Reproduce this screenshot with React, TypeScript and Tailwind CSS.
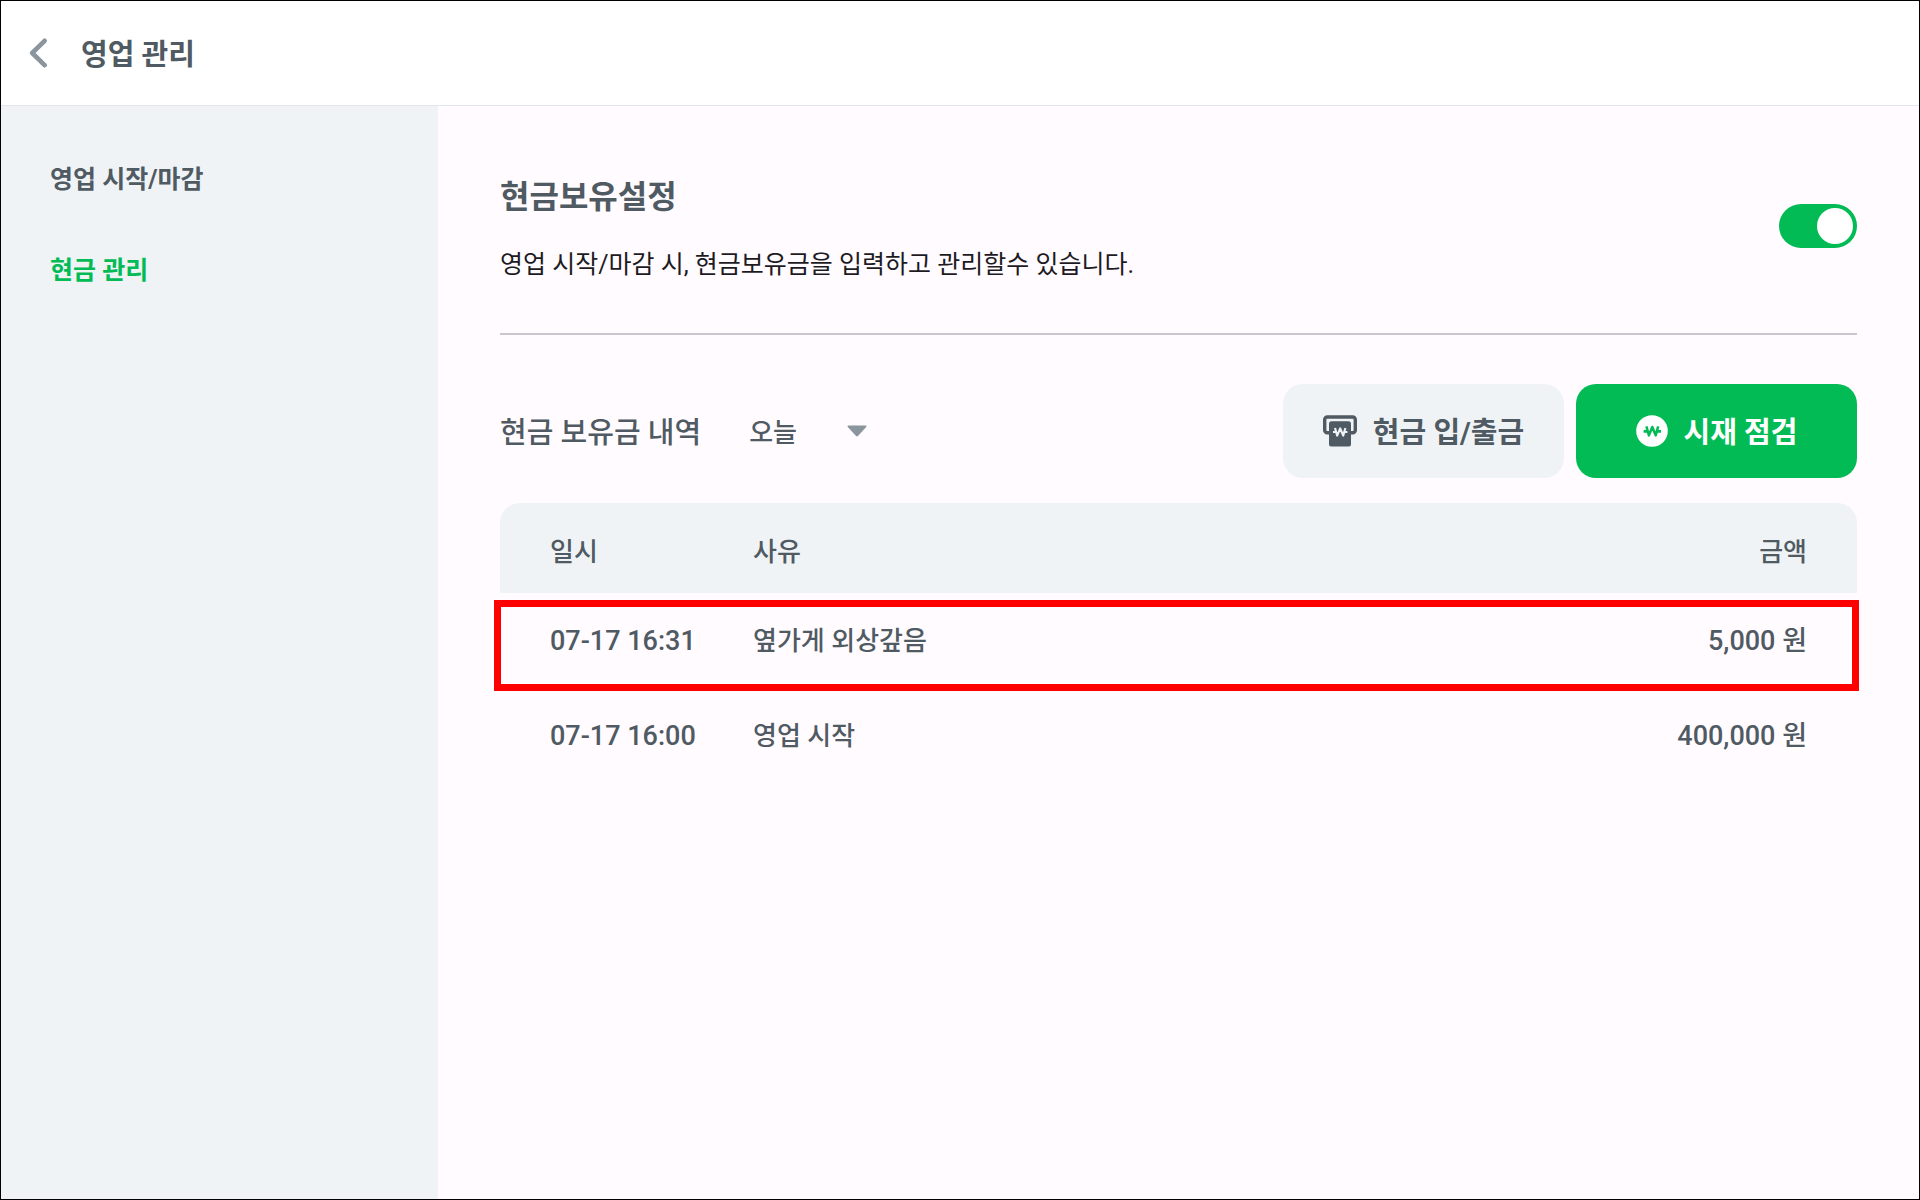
import { useState } from "react";

type CashRecord = {
  date: string;
  reason: string;
  amount: string;
  highlighted?: boolean;
};

const menuItems = [
  { label: "영업 시작/마감", active: false },
  { label: "현금 관리", active: true },
];

const records: CashRecord[] = [
  { date: "07-17 16:31", reason: "옆가게 외상갚음", amount: "5,000 원", highlighted: true },
  { date: "07-17 16:00", reason: "영업 시작", amount: "400,000 원" },
];

function BackIcon() {
  return (
    <svg className="w-5 h-8" viewBox="0 0 20 32" fill="none" stroke="#8a959e" strokeWidth="4.6" strokeLinecap="round" strokeLinejoin="round">
      <path d="M15.6 3.8 3.2 16l12.4 12.2" />
    </svg>
  );
}

function CashIcon() {
  return (
    <svg className="w-[34px] h-8" viewBox="0 0 34 32" fill="none">
      <path d="M7 17.8H4.2A2.5 2.5 0 0 1 1.7 15.3V4.6A2.6 2.6 0 0 1 4.3 2h25.4a2.6 2.6 0 0 1 2.6 2.6v10.7a2.5 2.5 0 0 1-2.5 2.5H27" stroke="#505a62" strokeWidth="3.4" />
      <path d="M6 8.8a2.6 2.6 0 0 1 2.6-2.6h16.8a2.6 2.6 0 0 1 2.6 2.6v20.7a2 2 0 0 1-2 2H8a2 2 0 0 1-2-2Z" fill="#505a62" />
      <path d="M12 13l2.2 7.6 3-7.2 3 7.2 2.2-7.600" stroke="#eff3f6" strokeWidth="2.1" strokeLinejoin="round" />
      <path d="M10 17h3.6M20.8 17h3.600" stroke="#eff3f6" strokeWidth="2" />
    </svg>
  );
}

function CoinIcon() {
  return (
    <svg className="w-8 h-8" viewBox="0 0 32 32" fill="none">
      <circle cx="16" cy="16" r="15.8" fill="#fff" />
      <path d="M10.4 11.4l2.5 9 3.4-8.400 3.4 8.400 2.5-9" stroke="#02bb55" strokeWidth="2.5" strokeLinejoin="round" />
      <path d="M7.600 16.400h4.400M20.6 16.400h4.400" stroke="#02bb55" strokeWidth="2.6" />
    </svg>
  );
}

export default function App() {
  const [enabled, setEnabled] = useState(true);

  return (
    <div className="min-h-screen flex flex-col border border-black bg-[#fffbff] text-[#505a62] font-[Roboto,'Noto_Sans_CJK_KR',sans-serif]">
      <header className="flex items-center gap-8 h-[105px] px-7 bg-white border-b border-[#e3e5ec]">
        <button type="button" aria-label="뒤로">
          <BackIcon />
        </button>
        <h1 className="pt-1 text-[29px] leading-10 font-bold">영업 관리</h1>
      </header>

      <div className="flex flex-1">
        <nav className="w-[437px] shrink-0 bg-[#eff3f6] px-[49px] py-[54px]">
          <ul className="space-y-[51px]">
            {menuItems.map((item) => (
              <li key={item.label}>
                <a
                  href="#"
                  className={`block text-[25px] leading-10 font-bold ${item.active ? "text-[#02bb55]" : ""}`}
                >
                  {item.label}
                </a>
              </li>
            ))}
          </ul>
        </nav>

        <main className="flex-1 px-[62px] pt-[67px]">
          <section className="flex items-start justify-between pb-12 border-b-2 border-[#cbc6ce]">
            <div>
              <h2 className="text-[32px] leading-[48px] font-bold">현금보유설정</h2>
              <p id="cash-desc" className="mt-6 text-[25px] leading-10 text-[#1d1b1f]">
                영업 시작/마감 시, 현금보유금을 입력하고 관리할수 있습니다.
              </p>
            </div>
            <label className="relative block mt-[31px] w-[78px] h-11 cursor-pointer">
              <input
                type="checkbox"
                role="switch"
                aria-label="현금보유설정"
                aria-describedby="cash-desc"
                checked={enabled}
                onChange={(e) => setEnabled(e.target.checked)}
                className="peer block w-full h-full appearance-none rounded-full bg-gray-300 checked:bg-[#02bb55]"
              />
              <span className="absolute top-1 left-1 size-9 rounded-full bg-white peer-checked:left-[38px]" />
            </label>
          </section>

          <div className="flex items-center mt-[49px]">
            <h3 className="pt-1 text-[29px] leading-10 font-medium">현금 보유금 내역</h3>
            <div className="grid items-center ml-12 w-[118px]">
              <select
                aria-label="조회 기간"
                className="col-start-1 row-start-1 pt-1 appearance-none bg-transparent text-[26px] leading-10 font-medium"
              >
                <option>오늘</option>
              </select>
              <svg className="col-start-1 row-start-1 justify-self-end w-5 h-3 pointer-events-none" viewBox="0 0 20 12">
                <path d="M1.5.5h17c.9 0 1.3.9.7 1.5l-8 8.700c-.7.7-1.7.7-2.4 0L.8 2C.2 1.4.6.5 1.5.5Z" fill="#8a959e" />
              </svg>
            </div>
            <div className="flex gap-3 ml-auto text-[29px] leading-10 font-bold">
              <button type="button" className="flex items-center justify-center gap-4 w-[281px] h-[94px] rounded-[20px] bg-[#eff3f6]">
                <CashIcon />
                <span className="pt-1">현금 입/출금</span>
              </button>
              <button type="button" className="flex items-center justify-center gap-4 w-[281px] h-[94px] rounded-[20px] bg-[#02bb55] text-white">
                <CoinIcon />
                <span className="pt-1">시재 점검</span>
              </button>
            </div>
          </div>

          <table className="w-full mt-[25px] text-[26px] leading-10 border-separate border-spacing-0">
            <thead>
              <tr className="h-[90px] text-left">
                <th className="w-[253px] pl-[50px] pt-2 bg-[#eff3f6] rounded-tl-[20px] font-medium">일시</th>
                <th className="pt-2 bg-[#eff3f6] font-medium">사유</th>
                <th className="pr-[50px] pt-2 bg-[#eff3f6] rounded-tr-[20px] font-medium text-right">금액</th>
              </tr>
            </thead>
            <tbody>
              {records.map((record) => (
                <tr key={record.date} className="relative h-[95px] font-medium">
                  <td className="pl-[50px] text-[27px]">
                    {record.date}
                    {record.highlighted && (
                      <span className="absolute top-[7px] -bottom-[3px] -left-[6px] -right-[2px] border-[7px] border-[#ff0000] pointer-events-none" />
                    )}
                  </td>
                  <td>{record.reason}</td>
                  <td className="pr-[50px] text-[27px] text-right">{record.amount}</td>
                </tr>
              ))}
            </tbody>
          </table>
        </main>
      </div>
    </div>
  );
}
